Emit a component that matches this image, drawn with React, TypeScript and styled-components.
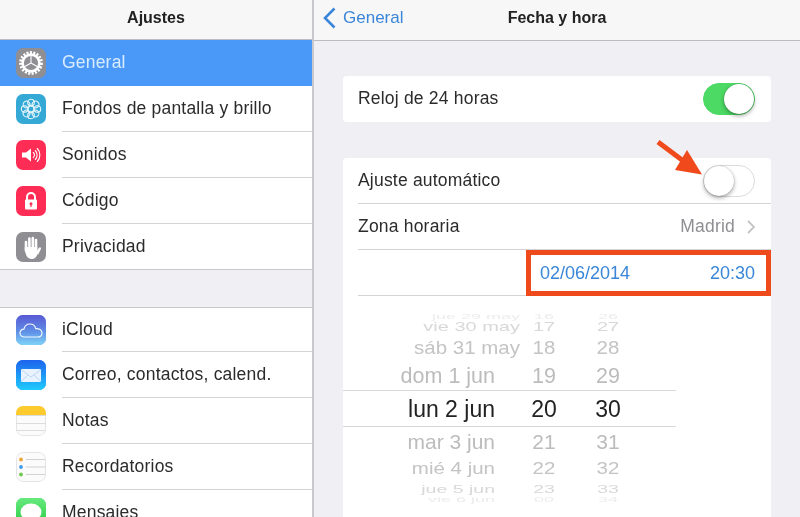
import styled, { createGlobalStyle } from 'styled-components';
import { ReactNode } from 'react';

const GlobalStyle = createGlobalStyle`
  html, body {
    margin: 0;
    padding: 0;
    background: #efeff4;
  }
  * {
    box-sizing: border-box;
  }
`;

const Screen = styled.div`
  position: relative;
  width: 800px;
  height: 517px;
  display: flex;
  overflow: hidden;
  font-family: 'Liberation Sans', Arial, sans-serif;
  font-size: 17.5px;
  letter-spacing: 0.2px;
  color: #2b2b2b;
  background: #efeff4;
  filter: blur(0.45px);
`;

const Sidebar = styled.aside`
  width: 314px;
  flex-shrink: 0;
  background: #fff;
  border-right: 2px solid #c9c9cd;
  display: flex;
  flex-direction: column;
`;

const SidebarHeader = styled.header`
  height: 40px;
  flex-shrink: 0;
  display: flex;
  align-items: center;
  justify-content: center;
  padding-bottom: 4px;
  background: #f7f7f8;
  border-bottom: 1px solid #b9bcc2;
  font-size: 16px;
  font-weight: 700;
  letter-spacing: 0;
  color: #222;
`;

const MenuRow = styled.div<{ $active?: boolean; $height?: number }>`
  height: ${(p) => p.$height ?? 46}px;
  flex-shrink: 0;
  display: flex;
  align-items: stretch;
  padding-left: 16px;
  background: ${(p) => (p.$active ? '#4a98f8' : '#fff')};
  color: ${(p) => (p.$active ? '#d8ecff' : '#2b2b2b')};
`;

const IconBox = styled.div<{ $bg: string }>`
  width: 30px;
  height: 30px;
  align-self: center;
  flex-shrink: 0;
  border-radius: 7px;
  overflow: hidden;
  background: ${(p) => p.$bg};
  svg {
    display: block;
  }
`;

const MenuLabel = styled.div<{ $sep?: boolean }>`
  flex: 1;
  margin-left: 16px;
  display: flex;
  align-items: center;
  border-bottom: 1px solid ${(p) => (p.$sep ? '#d4d4d8' : 'transparent')};
`;

const GroupGap = styled.div`
  height: 39px;
  flex-shrink: 0;
  background: #efeff4;
  border-top: 1px solid #c8c8cc;
  border-bottom: 1px solid #c8c8cc;
`;

const Detail = styled.main`
  flex: 1;
  min-width: 0;
  display: flex;
  flex-direction: column;
`;

const NavBar = styled.header`
  height: 41px;
  flex-shrink: 0;
  display: grid;
  grid-template-columns: 1fr auto 1fr;
  align-items: center;
  padding-bottom: 5px;
  background: #f7f7f8;
  border-bottom: 1px solid #b9bcc2;
`;

const BackLink = styled.div`
  display: flex;
  align-items: center;
  gap: 7px;
  padding-left: 9px;
  font-size: 17px;
  letter-spacing: 0;
  color: #3a86d8;
`;

const NavTitle = styled.div`
  font-size: 16px;
  font-weight: 700;
  letter-spacing: 0;
  color: #222;
`;

const Content = styled.div`
  flex: 1;
  min-height: 0;
  display: flex;
  flex-direction: column;
  gap: 36px;
  padding: 35px 29px 0;
`;

const Card = styled.section<{ $grow?: boolean }>`
  flex: ${(p) => (p.$grow ? 1 : 'none')};
  background: #fff;
  border-radius: 4px 4px ${(p) => (p.$grow ? '0 0' : '4px 4px')};
`;

const SettingRow = styled.div<{ $sep?: boolean }>`
  height: 46px;
  margin-left: 15px;
  padding-right: 16px;
  display: flex;
  align-items: center;
  justify-content: space-between;
  border-bottom: 1px solid ${(p) => (p.$sep ? '#d4d4d8' : 'transparent')};
`;

const Toggle = styled.div<{ $on?: boolean }>`
  position: relative;
  width: 52px;
  height: 32px;
  border-radius: 16px;
  background: ${(p) => (p.$on ? '#4cd964' : '#fff')};
  border: 1px solid ${(p) => (p.$on ? '#4cd964' : '#dcdcde')};
  &::after {
    content: '';
    position: absolute;
    top: 0;
    ${(p) => (p.$on ? 'right: 0;' : 'left: 0;')}
    width: 30px;
    height: 30px;
    border-radius: 50%;
    background: #fff;
    box-shadow: 0 2px 4px rgba(0, 0, 0, 0.35), 0 0 1px rgba(0, 0, 0, 0.3);
  }
`;

const ValueLink = styled.div`
  display: flex;
  align-items: center;
  gap: 12px;
  color: #8e8e93;
`;

const DateRow = styled.div`
  height: 46px;
  margin-left: 15px;
  display: flex;
  justify-content: flex-end;
  border-bottom: 1px solid #d4d4d8;
`;

const Highlight = styled.div`
  width: 245px;
  margin-bottom: -1px;
  padding: 0 11px 0 9px;
  display: flex;
  align-items: center;
  justify-content: space-between;
  border: 5px solid #ee4a1c;
  font-size: 18px;
  letter-spacing: 0;
  color: #3a86d8;
`;

const Picker = styled.div`
  width: 333px;
  margin-top: 17px;
  display: flex;
  flex-direction: column;
  letter-spacing: 0;
`;

const WheelRow = styled.div<{ $h: number; $size: number; $squash: number; $color: string; $selected?: boolean }>`
  height: ${(p) => p.$h}px;
  display: grid;
  grid-template-columns: 177px 48px 80px;
  align-items: center;
  overflow: hidden;
  font-size: ${(p) => p.$size}px;
  line-height: ${(p) => p.$h}px;
  color: ${(p) => p.$color};
  ${(p) => p.$selected && 'border-top: 1px solid #d8d8da; border-bottom: 1px solid #d8d8da;'}
  span {
    display: block;
    text-align: center;
    white-space: nowrap;
    transform: scaleY(${(p) => p.$squash});
  }
`;

const WheelDate = styled.span<{ $inset: number }>`
  && {
    text-align: right;
    padding-right: ${(p) => p.$inset}px;
  }
`;

const Annotation = styled.svg`
  position: absolute;
  left: 652px;
  top: 136px;
`;

const GearIcon = () => (
  <svg width="30" height="30" viewBox="0 0 30 30">
    <circle cx="15" cy="15" r="10.4" fill="none" stroke="#fff" strokeWidth="3" strokeDasharray="2 1.4" />
    <circle cx="15" cy="15" r="8.4" fill="none" stroke="#fff" strokeWidth="2.6" />
    <path d="M15 15 L15 7 M15 15 L8 19 M15 15 L22 19" stroke="#fff" strokeWidth="1.1" />
  </svg>
);

const FlowerIcon = () => {
  const angles = [0, 45, 90, 135, 180, 225, 270, 315];
  return (
    <svg width="30" height="30" viewBox="0 0 30 30" fill="none" stroke="#e8f7fd" strokeWidth="1.1">
      {angles.map((a) => (
        <circle key={a} cx="15" cy="8.6" r="3.3" transform={`rotate(${a} 15 15)`} />
      ))}
      <circle cx="15" cy="15" r="3" />
    </svg>
  );
};

const SpeakerIcon = () => (
  <svg width="30" height="30" viewBox="0 0 30 30">
    <path d="M6 12.5h4l5-4v13l-5-4H6z" fill="#fff" />
    <g fill="none" stroke="#fff" strokeWidth="1.1" strokeLinecap="round">
      <path d="M17.3 12.5a3.6 3.6 0 0 1 0 5" />
      <path d="M19.3 10.5a6.5 6.5 0 0 1 0 9" />
      <path d="M21.3 8.5a9.5 9.5 0 0 1 0 13" />
    </g>
  </svg>
);

const LockIcon = () => (
  <svg width="30" height="30" viewBox="0 0 30 30">
    <path d="M11 14v-3a4 4 0 0 1 8 0v3" fill="none" stroke="#fff" strokeWidth="2" />
    <rect x="9" y="13.5" width="12" height="10" rx="1" fill="#fff" />
    <circle cx="15" cy="17.8" r="1.5" fill="#ff2d55" />
    <rect x="14.4" y="18" width="1.2" height="3" fill="#ff2d55" />
  </svg>
);

const HandIcon = () => (
  <svg width="30" height="30" viewBox="0 0 30 30">
    <g stroke="#fff" strokeWidth="2.6" strokeLinecap="round">
      <path d="M10 10v8" />
      <path d="M13.4 6.5v10" />
      <path d="M16.8 6v10" />
      <path d="M20 8v9" />
    </g>
    <path d="M8.8 15h12.5v6c0 3.5-2.4 6-5.5 6-2.8 0-4.4-1.2-5.4-3.4L8.8 19z" fill="#fff" />
    <path d="M20 20l3-4.2c.9-1.2 2.5-.2 1.9 1.1L22 23z" fill="#fff" />
  </svg>
);

const CloudIcon = () => (
  <svg width="30" height="30" viewBox="0 0 30 30">
    <defs>
      <linearGradient id="cloudBg" x1="0" y1="0" x2="0" y2="1">
        <stop offset="0" stopColor="#5a58d4" />
        <stop offset="0.55" stopColor="#5f8fe6" />
        <stop offset="1" stopColor="#7fd4f7" />
      </linearGradient>
    </defs>
    <rect width="30" height="30" fill="url(#cloudBg)" />
    <path
      d="M8.5 22c-2.8 0-4.5-1.8-4.5-4 0-2.2 1.7-3.9 3.9-3.9C8.6 11 11 9 13.8 9c3 0 5.3 2 5.9 4.6 3.3-.3 6.3 1.5 6.3 4.3 0 2.4-2 4.1-4.7 4.1z"
      fill="none"
      stroke="#f3f8ff"
      strokeWidth="1.2"
    />
  </svg>
);

const MailIcon = () => (
  <svg width="30" height="30" viewBox="0 0 30 30">
    <defs>
      <linearGradient id="mailBg" x1="0" y1="0" x2="0" y2="1">
        <stop offset="0" stopColor="#1e62ee" />
        <stop offset="1" stopColor="#1ecbfd" />
      </linearGradient>
    </defs>
    <rect width="30" height="30" fill="url(#mailBg)" />
    <rect x="5" y="9" width="20" height="13" rx="1" fill="#e9f3ff" />
    <path d="M5 9.5l10 7.5 10-7.5M5 21.5l7-6.5M25 21.5l-7-6.5" fill="none" stroke="#a8c8f0" strokeWidth="0.7" />
  </svg>
);

const NotesIcon = () => (
  <svg width="30" height="30" viewBox="0 0 30 30">
    <rect x="0.5" y="0.5" width="29" height="29" rx="6.5" fill="#fbfbfb" stroke="#e4e4e6" />
    <rect width="30" height="9" fill="#fdcb2e" />
    <path d="M0 9.5h30M0 17.5h30M0 24.5h30" stroke="#dcdcdc" strokeWidth="1" />
  </svg>
);

const RemindersIcon = () => (
  <svg width="30" height="30" viewBox="0 0 30 30">
    <rect x="0.5" y="0.5" width="29" height="29" rx="6.5" fill="#fbfbfb" stroke="#e4e4e6" />
    <path d="M10 7.5h19M10 15h19M10 22.5h19" stroke="#d2d2d2" strokeWidth="1" />
    <circle cx="5" cy="7.5" r="1.9" fill="#eda53c" />
    <circle cx="5" cy="15" r="1.9" fill="#3f9be8" />
    <circle cx="5" cy="22.5" r="1.9" fill="#72c94e" />
  </svg>
);

const MessagesIcon = () => (
  <svg width="30" height="30" viewBox="0 0 30 30">
    <defs>
      <linearGradient id="msgBg" x1="0" y1="0" x2="0" y2="1">
        <stop offset="0" stopColor="#66ea7e" />
        <stop offset="1" stopColor="#24c93f" />
      </linearGradient>
    </defs>
    <rect width="30" height="30" fill="url(#msgBg)" />
    <ellipse cx="15" cy="14" rx="10.5" ry="8.5" fill="#fff" />
    <path d="M8 19l-1.5 5 6-3z" fill="#fff" />
  </svg>
);

type MenuItem = { label: string; bg: string; icon: ReactNode; sep?: boolean; active?: boolean; height?: number };

const firstGroup: MenuItem[] = [
  { label: 'General', bg: '#8e8e93', icon: <GearIcon />, active: true },
  { label: 'Fondos de pantalla y brillo', bg: '#35a9d6', icon: <FlowerIcon />, sep: true },
  { label: 'Sonidos', bg: '#ff2d55', icon: <SpeakerIcon />, sep: true },
  { label: 'Código', bg: '#ff2d55', icon: <LockIcon />, sep: true },
  { label: 'Privacidad', bg: '#8e8e93', icon: <HandIcon />, height: 45 },
];

const secondGroup: MenuItem[] = [
  { label: 'iCloud', bg: '#5f8fe6', icon: <CloudIcon />, sep: true, height: 44 },
  { label: 'Correo, contactos, calend.', bg: '#1e90f5', icon: <MailIcon />, sep: true },
  { label: 'Notas', bg: '#fbfbfb', icon: <NotesIcon />, sep: true },
  { label: 'Recordatorios', bg: '#fbfbfb', icon: <RemindersIcon />, sep: true },
  { label: 'Mensajes', bg: '#4cd964', icon: <MessagesIcon /> },
];

const wheel = [
  { h: 8, size: 18, squash: 0.35, color: '#ececec', date: 'jue 29 may', hour: '16', min: '26', inset: 0 },
  { h: 13, size: 20, squash: 0.6, color: '#d8d8d8', date: 'vie 30 may', hour: '17', min: '27', inset: 0 },
  { h: 28, size: 20.5, squash: 0.9, color: '#c4c4c4', date: 'sáb 31 may', hour: '18', min: '28', inset: 0 },
  { h: 28, size: 21.5, squash: 1, color: '#bcbcbc', date: 'dom 1 jun', hour: '19', min: '29', inset: 25 },
  { h: 37, size: 23, squash: 1, color: '#222', date: 'lun 2 jun', hour: '20', min: '30', inset: 25, selected: true },
  { h: 29, size: 21, squash: 0.95, color: '#bcbcbc', date: 'mar 3 jun', hour: '21', min: '31', inset: 25 },
  { h: 26, size: 20.5, squash: 0.78, color: '#c4c4c4', date: 'mié 4 jun', hour: '22', min: '32', inset: 25 },
  { h: 14, size: 19.5, squash: 0.55, color: '#d8d8d8', date: 'jue 5 jun', hour: '23', min: '33', inset: 25 },
  { h: 8, size: 18, squash: 0.35, color: '#ececec', date: 'vie 6 jun', hour: '00', min: '34', inset: 25 },
];

function Menu({ items }: { items: MenuItem[] }) {
  return (
    <>
      {items.map((item) => (
        <MenuRow key={item.label} $active={item.active} $height={item.height}>
          <IconBox $bg={item.bg}>{item.icon}</IconBox>
          <MenuLabel $sep={item.sep}>{item.label}</MenuLabel>
        </MenuRow>
      ))}
    </>
  );
}

export default function App() {
  return (
    <Screen>
      <GlobalStyle />
      <Sidebar>
        <SidebarHeader>Ajustes</SidebarHeader>
        <Menu items={firstGroup} />
        <GroupGap />
        <Menu items={secondGroup} />
      </Sidebar>

      <Detail>
        <NavBar>
          <BackLink>
            <svg width="13" height="22" viewBox="0 0 13 22" fill="none" stroke="#3a86d8" strokeWidth="2.6">
              <path d="M11.5 1.5L2 11l9.5 9.5" />
            </svg>
            General
          </BackLink>
          <NavTitle>Fecha y hora</NavTitle>
        </NavBar>
        <Content>
          <Card>
            <SettingRow>
              Reloj de 24 horas
              <Toggle $on />
            </SettingRow>
          </Card>
          <Card $grow>
            <SettingRow $sep>
              Ajuste automático
              <Toggle />
            </SettingRow>
            <SettingRow $sep>
              Zona horaria
              <ValueLink>
                Madrid
                <svg width="8" height="14" viewBox="0 0 8 14" fill="none" stroke="#c4c4c8" strokeWidth="1.8">
                  <path d="M1 1l6 6-6 6" />
                </svg>
              </ValueLink>
            </SettingRow>
            <DateRow>
              <Highlight>
                <span>02/06/2014</span>
                <span>20:30</span>
              </Highlight>
            </DateRow>
            <Picker>
              {wheel.map((row) => (
                <WheelRow
                  key={row.date}
                  $h={row.h}
                  $size={row.size}
                  $squash={row.squash}
                  $color={row.color}
                  $selected={row.selected}
                >
                  <WheelDate $inset={row.inset}>{row.date}</WheelDate>
                  <span>{row.hour}</span>
                  <span>{row.min}</span>
                </WheelRow>
              ))}
            </Picker>
          </Card>
        </Content>
      </Detail>

      <Annotation width="56" height="44" viewBox="0 0 56 44">
        <path d="M6 6L38 30" stroke="#f0491c" strokeWidth="5" />
        <path d="M50 38.5L35 14L23 34z" fill="#f0491c" />
      </Annotation>
    </Screen>
  );
}
